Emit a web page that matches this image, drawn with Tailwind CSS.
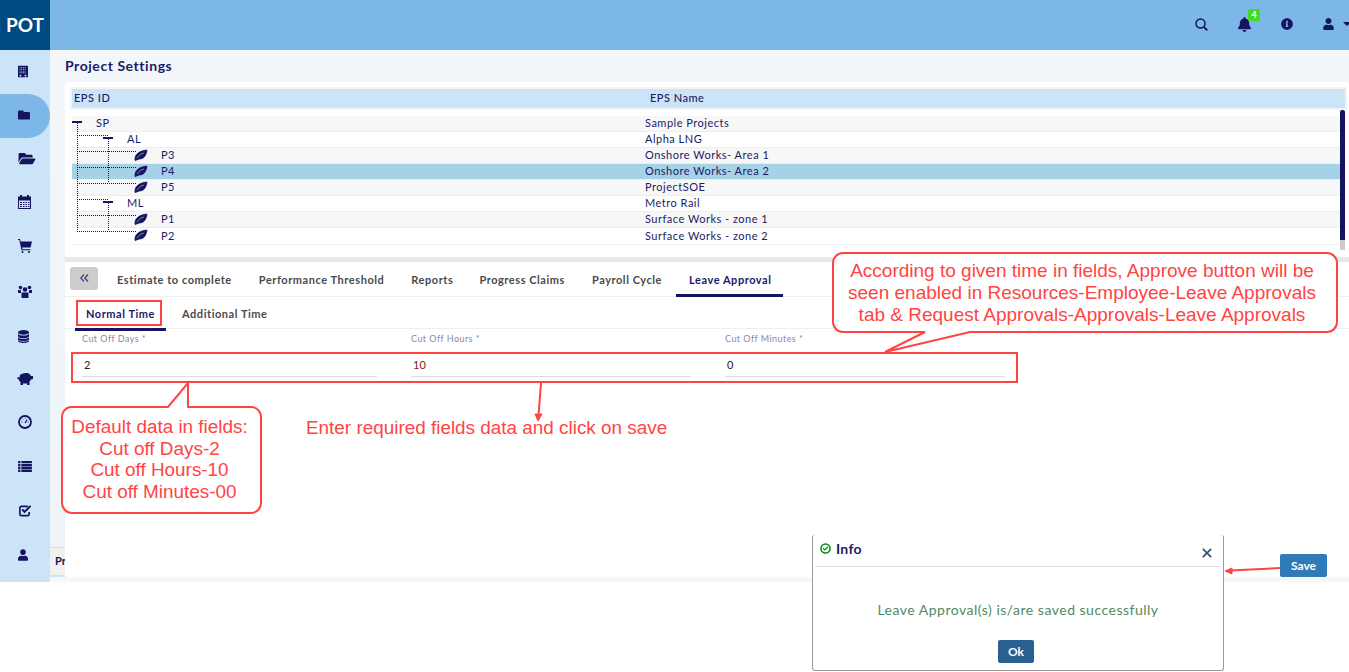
<!DOCTYPE html>
<html>
<head>
<meta charset="utf-8">
<script src="https://cdn.jsdelivr.net/npm/@tailwindcss/browser@4"></script>
</head>
<body class="font-['Lato',sans-serif] bg-white">
<div class="relative w-[1349px] h-[672px] overflow-hidden bg-white">
  <header class="flex h-[50px] bg-[#7db7e8]">
    <div class="w-[50px] bg-[#004a82] flex items-center justify-center text-white font-bold text-[19px]">POT</div>
    <div class="flex-1 relative">
      <div class="absolute left-[1145px] top-[18px] w-[13px] h-[13px]">
        <svg viewBox="0 0 13 13" class="w-full h-full" fill="none" stroke="#14145f"><circle cx="5.500" cy="5.500" r="4.500" stroke-width="1.500"/><path d="M8.800 8.800L12.300 12.300" stroke-width="1.900"/></svg>
      </div>
      <div class="absolute left-[1188px] top-[17px] w-[13px] h-[15px] text-[#14145f]">
        <svg viewBox="0 0 448 512" class="w-full h-full" fill="currentColor"><path d="M224 512c35.32 0 63.97-28.65 63.97-64H160.03c0 35.35 28.65 64 63.97 64zm215.39-149.71c-19.32-20.76-55.47-51.99-55.47-154.29 0-77.7-54.48-139.9-127.94-155.16V32c0-17.67-14.32-32-31.98-32s-31.98 14.33-31.98 32v20.84C118.56 68.1 64.08 130.3 64.08 208c0 102.3-36.15 133.53-55.47 154.29-6 6.45-8.66 14.16-8.61 21.71.11 16.4 12.98 32 32.1 32h383.8c19.12 0 32-15.6 32.1-32 .05-7.55-2.61-15.27-8.61-21.71z"/></svg>
      </div>
      <div class="absolute left-[1198px] top-[9px] w-[12px] h-[12px] bg-[#3fdc1f] rounded-[2px] text-white text-[9px] font-bold leading-[11px] text-center">4</div>
      <div class="absolute left-[1231px] top-[18px] w-[12px] h-[12px] text-[#14145f]">
        <svg viewBox="0 0 512 512" class="w-full h-full" fill="currentColor"><path d="M256 8C119 8 8 119.1 8 256c0 137 111 248 248 248s248-111 248-248C504 119.1 393 8 256 8zm0 110c23.2 0 42 18.8 42 42s-18.8 42-42 42-42-18.8-42-42 18.8-42 42-42zm56 254c0 6.6-5.4 12-12 12h-88c-6.6 0-12-5.4-12-12v-24c0-6.6 5.4-12 12-12h12v-64h-12c-6.6 0-12-5.4-12-12v-24c0-6.6 5.4-12 12-12h64c6.6 0 12 5.4 12 12v100h12c6.6 0 12 5.4 12 12v24z"/></svg>
      </div>
      <div class="absolute left-[1273px] top-[18px] w-[11px] h-[12px] text-[#14145f]">
        <svg viewBox="0 0 448 512" class="w-full h-full" fill="currentColor"><path d="M224 256c70.7 0 128-57.3 128-128S294.7 0 224 0 96 57.3 96 128s57.3 128 128 128zm89.6 32h-16.7c-22.2 10.2-46.9 16-72.9 16s-50.6-5.8-72.9-16h-16.7C60.2 288 0 348.2 0 422.4V464c0 26.5 21.5 48 48 48h352c26.5 0 48-21.5 48-48v-41.6c0-74.2-60.2-134.4-134.4-134.4z"/></svg>
      </div>
      <div class="absolute left-[1293px] top-[22px] w-0 h-0 border-x-[4px] border-x-transparent border-t-[4px] border-t-[#14145f]"></div>
    </div>
  </header>

  <div class="flex h-[532px]">
    <nav class="w-[50px] bg-[#cbe4f8] flex flex-col text-[#14145f]">
      <div class="h-[44px] flex items-center pl-[18px] pb-[2px]"><svg viewBox="0 0 12 14" class="w-[10px] h-[13px]" fill="currentColor"><path fill-rule="evenodd" d="M0 0h12v14H0zM2 2v1h1V2zm2 0v1h1V2zm2 0v1h1V2zm2 0v1h1V2zM2 4v1h1V4zm2 0v1h1V4zm2 0v1h1V4zm2 0v1h1V4zM2 6v1h1V6zm2 0v1h1V6zm2 0v1h1V6zm2 0v1h1V6zM2 8v1h1V8zm2 0v1h1V8zm2 0v1h1V8zm2 0v1h1V8zM2 11v2h2v-2zm6 0v2h2v-2z"/></svg></div>
      <div class="h-[44px] flex items-center pl-[18px] pb-[2px] bg-[#7db7e8] rounded-r-[22px]"><svg viewBox="0 0 512 512" class="w-[12px] h-[12px]" fill="currentColor"><path d="M464 128H272l-64-64H48C21.49 64 0 85.49 0 112v288c0 26.51 21.49 48 48 48h416c26.51 0 48-21.49 48-48V176c0-26.51-21.49-48-48-48z"/></svg></div>
      <div class="h-[44px] flex items-center pl-[18px] pb-[4px]"><svg viewBox="0 0 576 512" class="w-[18px] h-[15px]" fill="currentColor"><path d="M572.694 292.093L500.27 416.248A63.997 63.997 0 0 1 444.989 448H45.025c-18.523 0-30.064-20.093-20.731-36.093l72.424-124.155A64 64 0 0 1 152 256h399.964c18.523 0 30.064 20.093 20.73 36.093zM152 224h328v-48c0-26.51-21.49-48-48-48H272l-64-64H48C21.49 64 0 85.49 0 112v278.046l69.077-118.418C86.214 242.25 117.989 224 152 224z"/></svg></div>
      <div class="h-[44px] flex items-center pl-[18px] pb-[4px]"><svg viewBox="0 0 13 14" class="w-[13px] h-[14px]" fill="currentColor"><path fill-rule="evenodd" d="M2 0h2v1.500h5V0h2v1.500h2V14H0V1.500h2zM1 5.500v7.500h11V5.500zM2 7h2v1H2zm3 0h1.500v1H5zm2.500 0H9v1H7.500zM10 7h1.500v1H10zM2 9h2v1H2zm3 0h1.500v1H5zm2.500 0H9v1H7.500zM10 9h1.500v1H10zM2 11h2v1H2zm3 0h1.500v1H5zm2.500 0H9v1H7.500zM10 11h1.500v1H10z"/></svg></div>
      <div class="h-[44px] flex items-center pl-[18px] pb-[4px]"><svg viewBox="0 0 14 14" class="w-[14px] h-[14px]" fill="currentColor"><path d="M0 0h2l.6 2.500H14l-1.500 6H4.200l.3 1.800h8v1H3.500L1.300 1H0z"/><circle cx="4.500" cy="13" r="1"/><circle cx="11" cy="13" r="1"/></svg></div>
      <div class="h-[44px] flex items-center pl-[18px] pb-[2px]"><svg viewBox="0 0 14 13" class="w-[14px] h-[13px]" fill="currentColor"><circle cx="2.500" cy="2.500" r="1.800"/><circle cx="11.500" cy="2.500" r="1.800"/><circle cx="7" cy="4.500" r="2.300"/><path d="M0 5h2.800L3 8H0zM11.200 5H14v3h-3zM3.500 7.500h7V13h-7z"/></svg></div>
      <div class="h-[44px] flex items-center pl-[18px]"><svg viewBox="0 0 12 14" class="w-[11px] h-[13px]" fill="currentColor"><ellipse cx="6" cy="2.500" rx="6" ry="2.500"/><path d="M0 4c1 1.500 3 2 6 2s5-.5 6-2v2.500C12 8 9 9 6 9S0 8 0 6.500zM0 7.700C1 9 3 9.700 6 9.700s5-.7 6-2v2.300C12 11 9 12 6 12S0 11 0 10z"/><path d="M0 10.800c1 1.200 3 1.900 6 1.900s5-.7 6-1.900v.7c0 1.400-3 2.500-6 2.500s-6-1.100-6-2.500z"/></svg></div>
      <div class="h-[44px] flex items-center pl-[17px] pb-[2px]"><svg viewBox="0 0 16 12" class="w-[16px] h-[12px]" fill="currentColor"><path d="M3 2c1-1 3-2 6-2 2 0 3 .500 4 1.500l1 1.500h2v3l-2 .500c-.500 1-1 1.500-1.500 2V12h-2.500v-1.500H6V12H3.500V9C2 8 1.800 7 1.500 6L0 5.500 1 4l1.500.500z"/></svg></div>
      <div class="h-[44px] flex items-center pl-[18px] pb-[4px]"><svg viewBox="0 0 14 14" class="w-[14px] h-[14px]" fill="none" stroke="currentColor"><circle cx="7" cy="7" r="6" stroke-width="1.800"/><path d="M7 8l2-3.500" stroke-width="1.200"/><path d="M3.500 7h1M9.500 7h1M5 4.500l.500.500M7 3.500v.500" stroke-width="1"/></svg></div>
      <div class="h-[44px] flex items-center pl-[18px] pb-[4px]"><svg viewBox="0 0 15 12" class="w-[14px] h-[11px]" fill="currentColor"><path d="M0 0h2.500v2.500H0zM3.500 0H15v2.500H3.500zM0 3.200h2.500v2.500H0zM3.500 3.200H15v2.500H3.500zM0 6.400h2.500v2.500H0zM3.500 6.400H15v2.500H3.500zM0 9.500h2.500V12H0zM3.500 9.500H15V12H3.500z"/></svg></div>
      <div class="h-[44px] flex items-center pl-[18px] pb-[4px]"><svg viewBox="0 0 14 14" class="w-[14px] h-[13px]" fill="none" stroke="currentColor"><path d="M11.500 8.500v2.500a1.500 1.500 0 0 1-1.500 1.500H3A1.500 1.500 0 0 1 1.500 11V4A1.500 1.500 0 0 1 3 2.500h7" stroke-width="1.800"/><path d="M4 6l2.500 2.500L13 2" stroke-width="2.200"/></svg></div>
      <div class="h-[44px] flex items-center pl-[18px] pb-[2px]"><svg viewBox="0 0 448 512" class="w-[10px] h-[12px]" fill="currentColor"><path d="M224 256c70.7 0 128-57.3 128-128S294.7 0 224 0 96 57.3 96 128s57.3 128 128 128zm89.6 32h-16.7c-22.2 10.2-46.9 16-72.9 16s-50.6-5.8-72.9-16h-16.7C60.2 288 0 348.2 0 422.400V464c0 26.500 21.500 48 48 48h352c26.500 0 48-21.500 48-48v-41.600c0-74.200-60.200-134.400-134.400-134.400z"/></svg></div>
      <div class="flex-1"></div>
    </nav>

    <main class="flex-1 flex flex-col bg-gradient-to-b from-[#f3f7fa] to-[#eef3f6] min-w-0">
      <div class="flex flex-1 min-h-0">
        <div class="w-[15px] flex flex-col justify-end">
          <div class="h-[28px] bg-[#f1f1f1] border-t border-[#ddd] text-[11px] font-bold text-[#14145f] pl-[5px] leading-[26px] overflow-hidden whitespace-nowrap">Pr</div>
          <div class="h-[2px] bg-[#cbe4f8]"></div>
        </div>
        <div class="flex-1 flex flex-col min-w-0">
          <h1 class="h-[32px] text-[14px] font-bold text-[#1b1b66] tracking-[0.55px] leading-[32px]">Project Settings</h1>
          <section class="h-[175px] bg-white rounded-t-[3px] pt-[7px] pl-[7px] text-[11px] text-[#1b1b66] tracking-[0.5px]">
            <div class="w-[1273px] h-[19px] bg-[#cbe4f8] flex items-center font-medium outline-[2px] outline-[#f3f3f3]">
              <div class="w-[578px] pl-[2px]">EPS ID</div><div>EPS Name</div>
            </div>
            <div class="relative mt-[7px] pt-[1px] w-[1273px]">
              <div class="flex flex-col w-[1268px] border-b border-[#eee]">
                <div class="h-[16px] bg-[#f7f7f7] border-b border-[#eee] flex items-center"><div class="w-[573px] pl-[24px]">SP</div><div>Sample Projects</div></div>
                <div class="h-[16px] bg-white border-b border-[#eee] flex items-center"><div class="w-[573px] pl-[55px]">AL</div><div>Alpha LNG</div></div>
                <div class="h-[16px] bg-[#f7f7f7] border-b border-[#eee] flex items-center"><div class="w-[573px] pl-[89px]">P3</div><div>Onshore Works- Area 1</div></div>
                <div class="h-[16px] bg-[#a5d2e6] border-b border-[#eee] flex items-center"><div class="w-[573px] pl-[89px]">P4</div><div>Onshore Works- Area 2</div></div>
                <div class="h-[16px] bg-[#f7f7f7] border-b border-[#eee] flex items-center"><div class="w-[573px] pl-[89px]">P5</div><div>ProjectSOE</div></div>
                <div class="h-[16px] bg-white border-b border-[#eee] flex items-center"><div class="w-[573px] pl-[55px]">ML</div><div>Metro Rail</div></div>
                <div class="h-[16px] bg-[#f7f7f7] border-b border-[#eee] flex items-center"><div class="w-[573px] pl-[89px]">P1</div><div>Surface Works - zone 1</div></div>
                <div class="h-[16px] bg-white flex items-center"><div class="w-[573px] pl-[89px]">P2</div><div>Surface Works - zone 2</div></div>
              </div>
              <svg class="absolute left-0 top-0 w-[90px] h-[130px]" viewBox="0 0 90 130">
                <g fill="#14145f">
                  <rect x="0" y="6" width="10" height="2"/><rect x="31" y="22" width="10" height="2"/><rect x="31" y="86" width="10" height="2"/>
                </g>
                <path d="M5.500 8V116M5 20.500H36M36.500 24V68M5 36.500H64M5 52.500H64M5 68.500H64M5 84.500H36M36.500 88V116M5 100.500H64M5 116.500H64" fill="none" stroke="#14145f" stroke-dasharray="1 1"/>
                <g fill="#14145f" stroke="#14145f" stroke-width="0.800">
                  <path d="M63 44c0-4 3-8 12-9-1 6-3 9-8 9l-1 .500-3 1z"/>
                  <path d="M63 60c0-4 3-8 12-9-1 6-3 9-8 9l-1 .500-3 1z"/>
                  <path d="M63 76c0-4 3-8 12-9-1 6-3 9-8 9l-1 .500-3 1z"/>
                  <path d="M63 108c0-4 3-8 12-9-1 6-3 9-8 9l-1 .500-3 1z"/>
                  <path d="M63 124c0-4 3-8 12-9-1 6-3 9-8 9l-1 .500-3 1z"/>
                </g>
                <path d="M65 43c2-3 4-4 7-5M65 59c2-3 4-4 7-5M65 75c2-3 4-4 7-5M65 107c2-3 4-4 7-5M65 123c2-3 4-4 7-5" fill="none" stroke="#cbd5ee" stroke-width="0.600"/>
              </svg>
              <div class="absolute left-[1268px] top-[-5px] w-[5px] h-[130px] bg-[#14145f] rounded-t-[2px]"></div>
              <div class="absolute left-[1268px] top-[125px] w-[5px] h-[10px] bg-[#ccc]"></div>
            </div>
          </section>
          <div class="h-[5px] bg-[#e5eaec]"></div>
          <section class="flex-1 bg-white relative">
            <div class="flex h-[35px] border-b border-[#eee] items-start pl-[5px] pt-[5px] text-[11px] font-bold text-[#4a4a4a] tracking-[0.55px]">
              <div class="w-[28px] h-[23px] bg-[#ccc] rounded-[3px] flex items-center justify-center pb-[2px] mr-[19px]"><svg viewBox="0 0 9 8" class="w-[9px] h-[8px]" fill="none" stroke="#3a4a78" stroke-width="1.300"><path d="M4 .5L.8 4 4 7.500M8 .5L4.800 4 8 7.500"/></svg></div>
              <div class="h-[30px] mr-[27px] leading-[25px]">Estimate to complete</div>
              <div class="h-[30px] mr-[27px] leading-[25px]">Performance Threshold</div>
              <div class="h-[30px] mr-[26px] leading-[25px]">Reports</div>
              <div class="h-[30px] mr-[27px] leading-[25px]">Progress Claims</div>
              <div class="h-[30px] mr-[14px] leading-[25px]">Payroll Cycle</div>
              <div class="h-[30px] w-[107px] pl-[13px] leading-[25px] border-b-[3px] border-[#14145f] text-[#1b1b66]">Leave Approval</div>
            </div>
            <div class="flex h-[32px] border-b border-[#eee] pl-[10px] text-[11px] font-bold tracking-[0.55px] text-[#4a4a4a]">
              <div class="w-[91px] h-[34px] border-b-[3px] border-[#14145f] text-[#1b1b66] text-center leading-[34px] mr-[16px]">Normal Time</div>
              <div class="leading-[34px]">Additional Time</div>
            </div>
            <div class="flex pl-[17px] pt-[4px]">
              <div class="w-[329px]"><div class="text-[9px] text-[#8888b0] tracking-[0.45px] leading-[11px]">Cut Off Days *</div><div class="w-[295px] h-[23px] mt-[10px] border-b border-[#ddd] pl-[2px] text-[11px] text-[#222] leading-[22px]">2</div></div>
              <div class="w-[314px]"><div class="text-[9px] text-[#8888b0] tracking-[0.45px] leading-[11px]">Cut Off Hours *</div><div class="w-[280px] h-[23px] mt-[10px] border-b border-[#ddd] pl-[2px] text-[11px] text-[#7a1a1a] leading-[22px]">10</div></div>
              <div class="w-[280px]"><div class="text-[9px] text-[#8888b0] tracking-[0.45px] leading-[11px]">Cut Off Minutes *</div><div class="w-[280px] h-[23px] mt-[10px] border-b border-[#ddd] pl-[2px] text-[11px] text-[#222] leading-[22px]">0</div></div>
            </div>
            <button class="absolute left-[1215px] top-[292px] w-[47px] h-[23px] bg-[#2f7ab8] text-white text-[12px] font-bold rounded-[2px]">Save</button>
          </section>
        </div>
      </div>
      <div class="h-[5px] bg-[#f7f7f7]"></div>
    </main>
  </div>

  <!-- screenshot annotations over the page -->
  <svg class="absolute left-0 top-0 w-[1349px] h-[672px] pointer-events-none" viewBox="0 0 1349 672" fill="none" stroke="#ff4444" stroke-width="2">
    <rect x="77" y="301" width="84" height="24"/>
    <rect x="72" y="353" width="945" height="29"/>
    <path d="M843 253H1327a10 10 0 0 1 10 10V322a10 10 0 0 1-10 10H970L885 352 925 332H843a10 10 0 0 1-10-10V263a10 10 0 0 1 10-10z" fill="white"/>
    <path d="M70 407H168L188 383V407H251a10 10 0 0 1 10 10V503a10 10 0 0 1-10 10H72a10 10 0 0 1-10-10V417a10 10 0 0 1 8-10z" fill="white"/>
    <path d="M541 383L538.500 416"/>
    <path d="M535 414L538 421 542 414z" fill="#ff4444" stroke-width="1"/>
    <path d="M1280 568L1230 570.500"/>
    <path d="M1232 568L1225 571 1232 574z" fill="#ff4444" stroke-width="1"/>
  </svg>
  <div class="absolute left-[830px] top-[260px] w-[504px] text-center text-[19px] leading-[22px] text-[#ff4444] font-['Liberation_Sans',sans-serif]">According to given time in fields, Approve button will be<br>seen enabled in Resources-Employee-Leave Approvals<br>tab &amp; Request Approvals-Approvals-Leave Approvals</div>
  <div class="absolute left-[59px] top-[416px] w-[201px] text-center text-[18.900px] leading-[21.600px] text-[#ff4444] font-['Liberation_Sans',sans-serif]">Default data in fields:<br>Cut off Days-2<br>Cut off Hours-10<br>Cut off Minutes-00</div>
  <div class="absolute left-[306px] top-[417px] text-[18.900px] leading-[22px] text-[#ff4444] font-['Liberation_Sans',sans-serif] whitespace-nowrap">Enter required fields data and click on save</div>

  <div class="absolute left-[812px] top-[535px] w-[412px] h-[136px] bg-white border border-[#999] border-t-0 rounded-[3px] flex flex-col">
    <div class="h-[32px] mx-[2px] border-b border-[#ddd] flex items-center pl-[5px] pb-[4px] relative">
      <svg viewBox="0 0 512 512" class="w-[11px] h-[11px] mr-[5px]" fill="#0a8a1e"><path fill-rule="evenodd" d="M256 8a248 248 0 1 0 0 496 248 248 0 0 0 0-496zm0 72a176 176 0 1 1 0 352 176 176 0 0 1 0-352zm133 112l-38-38-128 128-62-62-38 38 100 100z"/></svg>
      <span class="text-[14px] font-bold text-[#1b1b66] tracking-[0.3px]">Info</span>
      <svg viewBox="0 0 12 12" class="absolute right-[9px] top-[13px] w-[10px] h-[10px]" stroke="#33506e" stroke-width="2" fill="none"><path d="M1 1l10 10M11 1L1 11"/></svg>
    </div>
    <p class="text-center text-[14px] text-[#4f8a5f] tracking-[0.5px] mt-[35px] leading-[16px]">Leave Approval(s) is/are saved successfully</p>
    <button class="self-center mt-[22px] mr-[4px] w-[36px] h-[23px] bg-[#2a6090] text-white text-[12px] font-bold rounded-[2px]">Ok</button>
  </div>
</div>
</body>
</html>
